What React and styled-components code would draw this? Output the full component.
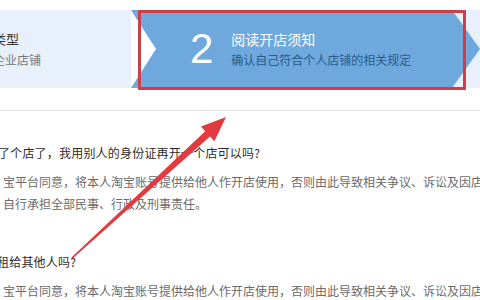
import React from "react";
import styled, { createGlobalStyle } from "styled-components";

const GlobalStyle = createGlobalStyle`
  html, body {
    margin: 0;
    padding: 0;
    background: #fff;
  }
  body {
    font-family: "Noto Sans CJK SC", "Noto Sans", sans-serif;
  }
`;

const Page = styled.div`
  position: relative;
  width: 480px;
  height: 300px;
  overflow: hidden;
  background: #fff;
`;

const StepBar = styled.div`
  display: flex;
  margin-top: 10px;
  height: 78px;
  background: #e8f1fb;
`;

const StepPrev = styled.div`
  width: 138px;
  flex-shrink: 0;
  display: flex;
  flex-direction: column;
  justify-content: center;
  gap: 3px;
  margin-left: -7px;
`;

const StepTitle = styled.div`
  font-size: ${(p) => p.size || 13}px;
  line-height: 18px;
  color: ${(p) => p.color || "#333"};
  white-space: nowrap;
`;

const StepActive = styled.div`
  position: relative;
  flex: 1;
  display: flex;
  align-items: center;
  padding-left: 59px;
  background: #6ea8dc;
  clip-path: polygon(0 0, calc(100% - 28px) 0, 100% 50%, calc(100% - 28px) 100%, 0 100%);
`;

const Notch = styled.div`
  position: absolute;
  left: 0;
  top: 0;
  width: 25px;
  height: 100%;
  background: #fff;
  clip-path: polygon(0 0, 100% 50%, 0 100%);
`;

const StepNum = styled.div`
  font-family: "Liberation Sans", Arial, sans-serif;
  font-size: 42px;
  font-weight: 300;
  color: #fff;
  line-height: 1;
  margin-right: 18px;
`;

const StepText = styled.div`
  display: flex;
  flex-direction: column;
  gap: 3px;
`;

const Divider = styled.div`
  margin-top: 22px;
  height: 1px;
  background: #e4e4e4;
`;

const Faq = styled.div`
  margin-top: ${(p) => p.top}px;
`;

const Question = styled.div`
  font-size: 12px;
  letter-spacing: 0.2px;
  line-height: 22px;
  color: #2b2b2b;
  white-space: nowrap;
  margin-left: ${(p) => p.shift || 0}px;
`;

const Answer = styled.div`
  margin-top: 7px;
  padding-left: 3px;
  font-size: 12px;
  line-height: 22px;
  color: #6a6a6a;
  white-space: nowrap;
`;

const Highlight = styled.div`
  position: absolute;
  left: 138px;
  top: 10px;
  width: 328px;
  height: 80px;
  box-sizing: border-box;
  border: 3px solid #c9404a;
  pointer-events: none;
`;

const Overlay = styled.svg`
  position: absolute;
  left: 0;
  top: 0;
  pointer-events: none;
`;

export default function App() {
  return (
    <Page>
      <GlobalStyle />
      <StepBar>
        <StepPrev>
          <StepTitle>类型</StepTitle>
          <StepTitle size={12} color="#777">企业店铺</StepTitle>
        </StepPrev>
        <StepActive>
          <Notch />
          <StepNum>2</StepNum>
          <StepText>
            <StepTitle size={14} color="#fff">阅读开店须知</StepTitle>
            <StepTitle size={12} color="#2b5c8c">确认自己符合个人店铺的相关规定</StepTitle>
          </StepText>
        </StepActive>
      </StepBar>
      <Divider />
      <Faq top={31}>
        <Question shift={-2}>了个店了，我用别人的身份证再开一个店可以吗?</Question>
        <Answer>
          宝平台同意，将本人淘宝账号提供给他人作开店使用，否则由此导致相关争议、诉讼及因店
          <br />
          自行承担全部民事、行政及刑事责任。
        </Answer>
      </Faq>
      <Faq top={36}>
        <Question shift={-3}>租给其他人吗?</Question>
        <Answer>宝平台同意，将本人淘宝账号提供给他人作开店使用，否则由此导致相关争议、诉讼及因店</Answer>
      </Faq>
      <Highlight />
      <Overlay width="480" height="300" viewBox="0 0 480 300">
        <polygon
          points="71.4,257.4 205.2,131.3 200.9,126.5 226,117 214.4,141.3 210,136.5 72.6,258.6"
          fill="#e23b3f"
        />
      </Overlay>
    </Page>
  );
}
